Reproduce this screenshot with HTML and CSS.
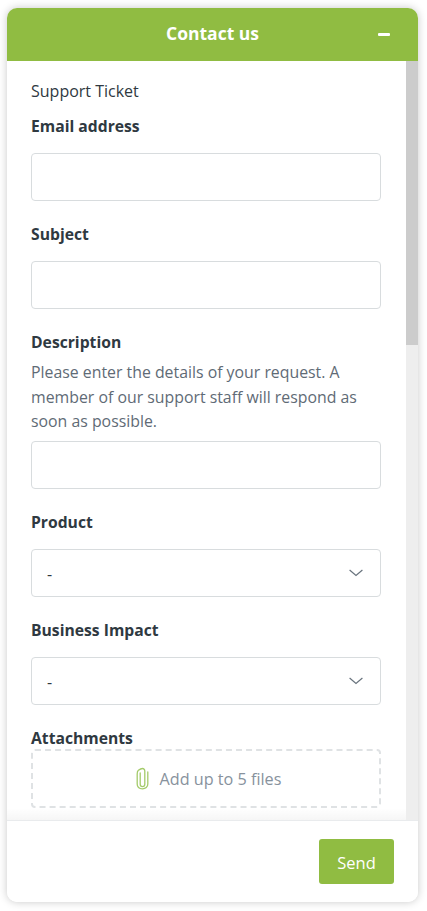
FILE: index.html
```html
<!DOCTYPE html>
<html lang="en">
<head>
<meta charset="utf-8">
<title>Contact us</title>
<link rel="stylesheet" href="styles.css">
</head>
<body>
<main class="widget">
  <header class="head">
    <h1 class="title">Contact us</h1>
    <button class="min" type="button" aria-label="Minimize"><span class="min-bar"></span></button>
  </header>
  <div class="middle">
    <form class="form">
      <p class="intro">Support Ticket</p>
      <div class="field">
        <label class="label">Email address</label>
        <div class="box box-first"></div>
      </div>
      <div class="field">
        <label class="label">Subject</label>
        <div class="box"></div>
      </div>
      <div class="field">
        <label class="label">Description</label>
        <p class="help">Please enter the details of your request. A member of our support staff will respond as soon as possible.</p>
        <div class="box box-help"></div>
      </div>
      <div class="field">
        <label class="label">Product</label>
        <div class="box select"><span class="dash">-</span>
          <svg class="chev" width="14" height="8" viewBox="0 0 14 8"><path d="M.6 1 7 6.500 13.400 1" fill="none" stroke="#68737d" stroke-width="1.200"/></svg>
        </div>
      </div>
      <div class="field">
        <label class="label">Business Impact</label>
        <div class="box select"><span class="dash">-</span>
          <svg class="chev" width="14" height="8" viewBox="0 0 14 8"><path d="M.6 1 7 6.500 13.400 1" fill="none" stroke="#68737d" stroke-width="1.200"/></svg>
        </div>
      </div>
      <div class="field">
        <label class="label">Attachments</label>
        <div class="drop">
          <svg class="clip" width="13" height="23" viewBox="0 0 13 23"><path d="M4.200 6v11.200c0 1.500 1 2.400 2.300 2.400s2.300-.9 2.300-2.400V4.300C8.800 2.600 7.800 1.500 6.500 1.500S3.600 2.400 2.400 3.300 1.200 5.500 1.200 7v10c0 3 2.300 4.800 5.300 4.800s5.300-1.800 5.300-4.800V5" fill="none" stroke="#a4cb6a" stroke-width="1.300" stroke-linecap="round"/></svg>
          <span class="drop-text">Add up to 5 files</span>
        </div>
      </div>
    </form>
    <div class="track"><div class="thumb"></div></div>
  </div>
  <footer class="foot">
    <button class="send" type="button">Send</button>
  </footer>
</main>
</body>
</html>
```
FILE: styles.css
```css
* { box-sizing: border-box; }
html, body { height: 100%; }
body {
  margin: 0;
  padding: 8px 9px 9px 7px;
  background: #fff;
  font-family: "Open Sans", "Noto Sans", "Liberation Sans", sans-serif;
  color: #2f3941;
  overflow: hidden;
}
.widget {
  height: 894px;
  display: flex;
  flex-direction: column;
  background: #fff;
  border-radius: 10px;
  overflow: hidden;
  box-shadow: 0 0 8px rgba(0, 0, 0, .22);
}
.head {
  height: 53px;
  flex: none;
  background: #90bc42;
  display: flex;
  align-items: center;
  justify-content: center;
  position: relative;
}
.title {
  margin: 0;
  padding-bottom: 3px;
  color: #fff;
  font-size: 17.500px;
  font-weight: 700;
  line-height: 50px;
}
.min {
  position: absolute;
  right: 28px;
  top: 25px;
  width: 12px;
  height: 3px;
  padding: 0;
  border: 0;
  background: none;
  display: block;
}
.min-bar { display: block; height: 2.500px; background: #fff; border-radius: 1px; }
.middle {
  flex: 1;
  min-height: 0;
  display: flex;
  position: relative;
}
.middle::after {
  content: "";
  position: absolute;
  left: 0;
  right: 12px;
  bottom: 0;
  height: 12px;
  background: linear-gradient(to bottom, rgba(255,255,255,0), rgba(0,0,0,.035));
}
.form {
  flex: 1;
  min-width: 0;
  padding: 18px 25px 0 24px;
  overflow: hidden;
}
.intro {
  margin: 0;
  font-size: 16px;
  line-height: 24px;
}
.field { margin-bottom: 21px; }
.label {
  display: block;
  font-size: 15.700px;
  font-weight: 700;
  line-height: 24px;
}
.intro + .field { margin-top: 11px; }
.box {
  height: 48px;
  margin-top: 15px;
  border: 1px solid #d8dcde;
  border-radius: 4px;
  background: #fff;
}
.box-help { margin-top: 7px; }
.help {
  margin: 6px 0 0;
  font-size: 15.850px;
  line-height: 24.500px;
  color: #5f6b76;
}
.select {
  display: flex;
  align-items: center;
  justify-content: space-between;
  padding: 0 17px 0 15px;
  font-size: 16px;
}
.dash { padding-top: 2px; }
.drop {
  height: 59px;
  margin-top: -1px;
  padding-left: 5px;
  border: 2px dashed #dfe2e4;
  border-radius: 4px;
  display: flex;
  align-items: center;
  justify-content: center;
  gap: 11px;
  font-size: 16.200px;
  color: #87929d;
}
.drop-text { padding-top: 2px; }
.clip { flex: none; }
.track {
  width: 12px;
  flex: none;
  background: #eeeeee;
}
.thumb { height: 284px; background: #cccccc; }
.foot {
  height: 82px;
  flex: none;
  border-top: 1px solid #e9ebed;
  background: #fff;
  display: flex;
  justify-content: flex-end;
  align-items: flex-start;
  padding: 18px 24px 0 0;
}
.send {
  width: 75px;
  height: 45px;
  border: 0;
  border-radius: 3px;
  background: #90bc42;
  color: #fff;
  font: 400 16.500px "Open Sans", "Noto Sans", sans-serif;
  padding: 2px 0 0;
}
```
